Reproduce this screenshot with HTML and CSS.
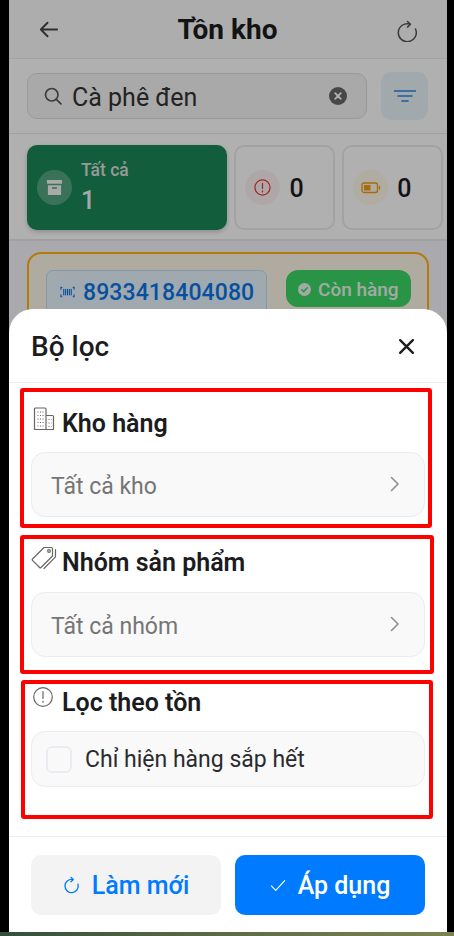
FILE: index.html
```html
<!DOCTYPE html>
<html lang="vi">
<head>
  <meta charset="UTF-8" />
  <meta name="viewport" content="width=device-width, initial-scale=1.0"/>
  <title>Tồn kho</title>
  <link rel="stylesheet" href="styles.css">
</head>
<body>

  <div class="frame">
    <header class="topbar">
      <svg class="ic-back" viewBox="0 0 24 24"><path d="M21 12H4M11 5l-7 7 7 7"/></svg>
      <h1>Tồn kho</h1>
      <svg class="ic-reload" viewBox="0 0 24 24"><path d="M12.500 3.500l3 2.700-3 2.900M15 6.100A9 9 0 1 0 20.500 11"/></svg>
    </header>

    <div class="search-row">
      <div class="search">
        <svg class="ic-search" viewBox="0 0 24 24"><circle cx="10.500" cy="10.500" r="7.500"/><path d="M16 16l5.500 5.500"/></svg>
        <span class="search-text">Cà phê đen</span>
        <svg class="ic-clear" viewBox="0 0 18 18"><circle cx="9" cy="9" r="9"/><path d="M6.200 6.200l5.600 5.600M11.800 6.200l-5.600 5.600"/></svg>
      </div>
      <button class="filter-btn">
        <svg viewBox="0 0 22 12"><path d="M0 1h22M4 6h14M8 11h6"/></svg>
      </button>
    </div>

    <div class="stats">
      <div class="stat stat-all">
        <span class="stat-icon">
          <svg viewBox="0 0 18 18"><path class="fill" d="M1 1h16v4H1zM2 6.500h14V17H2z"/><path class="cut" d="M7 9.500h4"/></svg>
        </span>
        <div>
          <div class="stat-label">Tất cả</div>
          <div class="stat-num">1</div>
        </div>
      </div>
      <div class="stat stat-small">
        <span class="stat-icon red">
          <svg viewBox="0 0 18 18"><circle cx="9" cy="9" r="8"/><path d="M9 4.500v5.500M9 12.500v1.200"/></svg>
        </span>
        <b>0</b>
      </div>
      <div class="stat stat-small">
        <span class="stat-icon amber">
          <svg viewBox="0 0 20 12"><rect x="1" y="1" width="15.500" height="9.500" rx="2"/><rect class="solid" x="3" y="3" width="6.500" height="5.500"/><path d="M18.500 4.500v2.500"/></svg>
        </span>
        <b>0</b>
      </div>
    </div>

    <div class="list">
      <div class="product">
        <div class="barcode">
          <svg viewBox="0 0 16 12"><path d="M1 3V1h1M1 9v2h1M15 3V1h-1M15 9v2h-1M4 3v6M6 3v6M8 3v6M10 3v6M12 3v6"/></svg>
          <span>8933418404080</span>
        </div>
        <span class="badge">
          <svg viewBox="0 0 14 14"><circle cx="7" cy="7" r="7"/><path d="M4 7.200l2.100 2.100L10 5.200"/></svg>
          Còn hàng
        </span>
      </div>
    </div>

    <div class="overlay"></div>

    <div class="sheet">
      <div class="sheet-head">
        <h2>Bộ lọc</h2>
        <svg class="ic-close" viewBox="0 0 16 16"><path d="M2 2l12 12M14 2L2 14"/></svg>
      </div>

      <section class="group group-store">
        <div class="group-title">
          <svg class="ic-store" viewBox="0 0 22 24"><path d="M1.500 22.500V2a1 1 0 0 1 1-1h9.500a1 1 0 0 1 1 1v20.500M13 8.500h6.500a1 1 0 0 1 1 1v13H1.500"/><path class="dots" d="M4.500 5h6M4.500 8.500h6M4.500 12h6M4.500 15.500h6M4.500 19h6M15.500 12.500h3M15.500 16h3M15.500 19.500h3"/></svg>
          <h3>Kho hàng</h3>
        </div>
        <div class="select"><span>Tất cả kho</span><svg viewBox="0 0 10 16"><path d="M1.500 1.500L8 8l-6.500 6.500"/></svg></div>
      </section>

      <section class="group group-cat">
        <div class="group-title">
          <svg class="ic-tags" viewBox="0 0 26 24"><path d="M1.500 13L13 1.500h7.500a1 1 0 0 1 1 1V10L10 21.500a1 1 0 0 1-1.400 0L1.500 14.400a1 1 0 0 1 0-1.400z"/><circle cx="18" cy="5" r="1.300"/><path d="M24.500 3.500v7.300L13 22.500"/></svg>
          <h3>Nhóm sản phẩm</h3>
        </div>
        <div class="select"><span>Tất cả nhóm</span><svg viewBox="0 0 10 16"><path d="M1.500 1.500L8 8l-6.500 6.500"/></svg></div>
      </section>

      <section class="group group-stock">
        <div class="group-title">
          <svg class="ic-alert" viewBox="0 0 20 20"><circle cx="10" cy="10" r="9.300"/><path d="M10 4.500v7M10 14v1.300"/></svg>
          <h3>Lọc theo tồn</h3>
        </div>
        <label class="check-row"><span class="checkbox"></span>Chỉ hiện hàng sắp hết</label>
      </section>

      <div class="sheet-foot">
        <button class="btn btn-reset">
          <svg viewBox="0 0 18 18"><path d="M8.500 1l2.400 2.200-2.400 2.300M10.500 3.200A7 7 0 1 0 15.800 8"/></svg>
          Làm mới
        </button>
        <button class="btn btn-apply">
          <svg viewBox="0 0 18 14"><path d="M1.500 7.500l5 5L16.500 1.500"/></svg>
          Áp dụng
        </button>
      </div>
    </div>
  </div>

  <div class="strip"></div>

</body>
</html>
```

FILE: styles.css
```css
* {
  box-sizing: border-box;
}

html, body {
  margin: 0;
  padding: 0;
  background: #000;
  font-family: 'Roboto', sans-serif;
  color: #1c1c1e;
}

body {
  height: 936px;
  overflow: hidden;
}

.frame {
  position: relative;
  height: 932px;
  margin: 0 7px 0 9px;
  background: #fff;
  overflow: hidden;
}

.strip {
  height: 4px;
  background: linear-gradient(90deg, #34503a, #5c6b48 50%, #7c8350);
}

svg {
  display: block;
  fill: none;
  stroke-linecap: round;
  stroke-linejoin: round;
}

/* page behind the sheet */
.topbar {
  height: 59px;
  background: #f8f8f8;
  border-bottom: 1px solid #e8e8e8;
  display: flex;
  align-items: center;
  justify-content: space-between;
  padding: 0 28px;
}

.topbar h1 {
  margin: 0;
  font-size: 28px;
  font-weight: 700;
}

.ic-back {
  width: 23px;
  height: 23px;
  stroke: #444;
  stroke-width: 2;
}

.ic-reload {
  width: 24px;
  height: 24px;
  margin-top: 1px;
  stroke: #555;
  stroke-width: 1.500;
}

.search-row {
  height: 75px;
  background: #fdfdfd;
  border-bottom: 1px solid #e6e6e6;
  display: flex;
  align-items: center;
  gap: 14px;
  padding: 0 19px 0 18px;
}

.search {
  flex: 1;
  height: 46px;
  background: #f2f2f2;
  border: 1px solid #ddd;
  border-radius: 10px;
  display: flex;
  align-items: center;
  padding: 0 19px 0 15px;
}

.ic-search {
  width: 20px;
  height: 20px;
  stroke: #555;
  stroke-width: 2;
}

.search-text {
  flex: 1;
  margin: 3px 0 0 9px;
  font-size: 25px;
  color: #333;
}

.ic-clear {
  width: 18px;
  height: 18px;
}

.ic-clear circle {
  fill: #666;
}

.ic-clear path {
  stroke: #fff;
  stroke-width: 1.800;
}

.filter-btn {
  width: 47px;
  height: 48px;
  padding: 0;
  border: 0;
  border-radius: 10px;
  background: #e8f2f8;
  display: flex;
  align-items: center;
  justify-content: center;
}

.filter-btn svg {
  width: 22px;
  height: 12px;
  stroke: #2a82e4;
  stroke-width: 1.600;
}

.stats {
  height: 107px;
  background: #fdfdfd;
  border-bottom: 2px solid #e6e6e6;
  display: flex;
  gap: 7px;
  padding: 11px 4px 0 18px;
}

.stat {
  height: 85px;
  border-radius: 10px;
  display: flex;
  align-items: center;
}

.stat-all {
  width: 201px;
  background: #1a8656;
  padding-left: 10px;
  gap: 9px;
  box-shadow: 0 2px 5px rgba(0, 0, 0, 0.2);
}

.stat-small {
  width: 101px;
  background: #fdfdfd;
  border: 2px solid #e8e8e8;
  padding-left: 9px;
  gap: 9px;
}

.stat-small b {
  font-size: 25px;
  font-weight: 500;
  margin-top: 2px;
}

.stat-icon {
  width: 35px;
  height: 35px;
  border-radius: 50%;
  display: flex;
  align-items: center;
  justify-content: center;
  background: rgba(255, 255, 255, 0.25);
  flex-shrink: 0;
}

.stat-all .stat-icon svg {
  width: 17px;
  height: 17px;
}

.stat-all .fill {
  fill: #f2f2f2;
}

.stat-all .cut {
  stroke: #3f9a72;
  stroke-width: 1.500;
}

.stat-label {
  font-size: 17.500px;
  font-weight: 500;
  color: #dcdcdc;
}

.stat-num {
  font-size: 25px;
  font-weight: 500;
  color: #f0f0f0;
  margin-top: 6px;
}

.stat-icon.red {
  background: #fbf0f0;
}

.stat-icon.red svg {
  width: 17px;
  height: 17px;
  stroke: #e0393a;
  stroke-width: 1.300;
}

.stat-icon.amber {
  background: #fdf6e8;
}

.stat-icon.amber svg {
  width: 20px;
  height: 12px;
  stroke: #f09a10;
  stroke-width: 1.300;
}

.stat-icon.amber .solid {
  fill: #f09a10;
  stroke: none;
}

.list {
  height: 700px;
  background: #f2f2f9;
  padding: 11px 18px;
}

.product {
  height: 120px;
  background: #fdf5e6;
  border: 2px solid #ffb012;
  border-radius: 14px;
  display: flex;
  align-items: flex-start;
  gap: 19px;
  padding: 16px 0 0 17px;
}

.barcode {
  width: 221px;
  height: 50px;
  background: #e6f2fb;
  border: 1px solid #bcdcf2;
  border-radius: 7px;
  display: flex;
  align-items: flex-start;
  gap: 8px;
  padding: 11px 0 0 13px;
  font-size: 23px;
  font-weight: 500;
  letter-spacing: 0.1px;
  color: #0a74e4;
}

.barcode svg {
  width: 15px;
  height: 12px;
  margin-top: 4px;
  stroke: #0a74e4;
  stroke-width: 1.200;
}

.barcode span {
  line-height: 22px;
}

.badge {
  height: 37px;
  background: #3cd565;
  border-radius: 12px;
  display: flex;
  align-items: center;
  gap: 7px;
  padding: 1px 12px 0;
  font-size: 19px;
  font-weight: 500;
  color: #e8f5ea;
}

.badge svg {
  width: 13px;
  height: 13px;
}

.badge circle {
  fill: #e8f5ea;
}

.badge path {
  stroke: #3cd565;
  stroke-width: 1.600;
}

.overlay {
  position: absolute;
  inset: 0;
  background: rgba(0, 0, 0, 0.3);
}

/* filter sheet */
.sheet {
  position: absolute;
  left: 0;
  right: 0;
  bottom: 0;
  height: 623px;
  background: #fff;
  border-radius: 24px 24px 0 0;
}

.sheet-head {
  height: 74px;
  border-bottom: 1px solid #e9e9ef;
  display: flex;
  align-items: center;
  justify-content: space-between;
  padding: 2px 32px 0 22px;
}

.sheet-head h2 {
  margin: 0;
  font-size: 28px;
  font-weight: 500;
}

.ic-close {
  width: 17px;
  height: 17px;
  stroke: #1c1c1e;
  stroke-width: 2.200;
}

.group {
  border: 4px solid #f00;
  border-radius: 3px;
}

.group-store {
  height: 140px;
  margin: 5px 15px 0 11px;
  padding: 16px 3px 0 7px;
}

.group-cat {
  height: 139px;
  margin: 7px 13px 0 11px;
  padding: 8px 5px 0 7px;
}

.group-stock {
  height: 139px;
  margin: 6px 14px 0 12px;
  padding: 3px 4px 0 6px;
}

.group-title {
  height: 30px;
  position: relative;
  display: flex;
  align-items: center;
  padding-left: 31px;
}

.group-title h3 {
  margin: 0;
  font-size: 25px;
  font-weight: 600;
}

.group-title svg {
  position: absolute;
  stroke: #666;
}

.ic-store {
  left: 2px;
  top: -1px;
  width: 22px;
  height: 24px;
  stroke-width: 1.200;
}

.ic-store .dots {
  stroke-dasharray: 1 1.500;
  stroke-linecap: butt;
  stroke-width: 1.200;
}

.ic-tags {
  left: 0;
  top: -1px;
  width: 26px;
  height: 24px;
  stroke-width: 1.200;
}

.ic-alert {
  left: 2px;
  top: 0;
  width: 20px;
  height: 20px;
  stroke-width: 1.200;
}

.select {
  height: 65px;
  margin-top: 14px;
  background: #f9f9fa;
  border: 1px solid #ececf1;
  border-radius: 14px;
  display: flex;
  align-items: center;
  justify-content: space-between;
  padding: 0 24px 0 19px;
  font-size: 23px;
  color: #757575;
}

.select span {
  margin-top: 3px;
}

.group-cat .select {
  margin-top: 15px;
}

.select svg {
  width: 10px;
  height: 16px;
  margin-top: -2px;
  stroke: #8e8e93;
  stroke-width: 1.600;
}

.check-row {
  height: 56px;
  margin-top: 14px;
  background: #f9f9fa;
  border: 1px solid #ececf1;
  border-radius: 14px;
  display: flex;
  align-items: center;
  gap: 13px;
  padding-left: 14px;
  font-size: 23px;
  color: #2b2b2e;
}

.checkbox {
  width: 26px;
  height: 27px;
  background: #f9f9fa;
  border: 2px solid #ebebf2;
  border-radius: 6px;
}

.sheet-foot {
  margin-top: 17px;
  border-top: 1px solid #ececf0;
  display: flex;
  gap: 14px;
  padding: 18px 22px 0;
}

.btn {
  flex: 1;
  height: 60px;
  padding: 0;
  border: 0;
  border-radius: 10px;
  display: flex;
  align-items: center;
  justify-content: center;
  gap: 12px;
  font-family: inherit;
  font-size: 25px;
  font-weight: 500;
}

.btn-reset {
  background: #f3f3f4;
  color: #007aff;
}

.btn-reset svg {
  width: 17px;
  height: 18px;
  stroke: #007aff;
  stroke-width: 1.400;
}

.btn-apply {
  background: #007aff;
  color: #fff;
}

.btn-apply svg {
  width: 16px;
  height: 13px;
  stroke: #fff;
  stroke-width: 1.300;
}
```
